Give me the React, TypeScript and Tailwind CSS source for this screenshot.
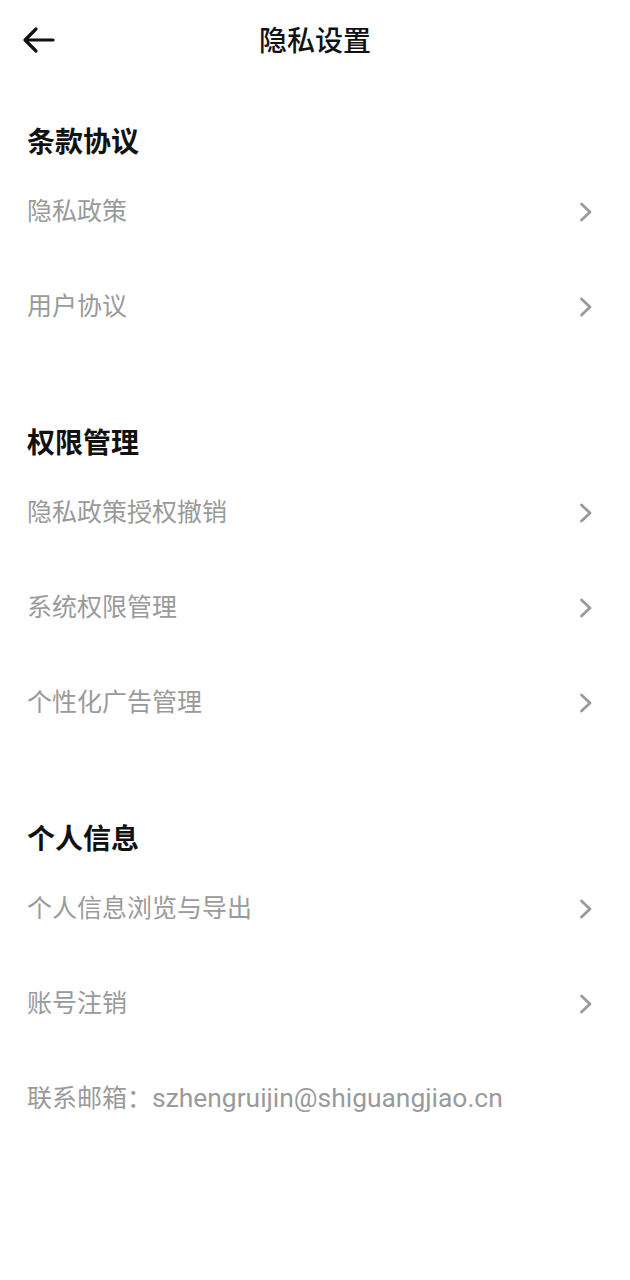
import React from 'react';

const font = "font-['Roboto','Noto_Sans_CJK_SC',sans-serif]";

interface Section {
  title: string;
  items: string[];
}

const sections: Section[] = [
  { title: '条款协议', items: ['隐私政策', '用户协议'] },
  { title: '权限管理', items: ['隐私政策授权撤销', '系统权限管理', '个性化广告管理'] },
  { title: '个人信息', items: ['个人信息浏览与导出', '账号注销'] },
];

const Chevron = () => (
  <svg width="15" height="22" viewBox="0 0 15 22" fill="none" className="shrink-0">
    <path d="M3.5 3l8.5 8-8.5 8" stroke="#9a9a9a" strokeWidth="2.8" strokeLinecap="round" strokeLinejoin="round" />
  </svg>
);

const App: React.FC = () => {
  return (
    <div className={`w-[630px] min-h-[1280px] bg-white ${font}`}>
      {/* top bar */}
      <div className="relative h-[84px] flex items-center justify-center">
        <button className="absolute left-[22px] top-[26px]">
          <svg width="34" height="28" viewBox="0 0 34 28" fill="none">
            <path d="M31 14H4M14 3L3 14l11 11" stroke="#111" strokeWidth="3.2" strokeLinecap="round" strokeLinejoin="round" />
          </svg>
        </button>
        <h1 className="text-[28px] font-medium text-[#111] leading-none">隐私设置</h1>
      </div>

      <div className="mt-[38px]">
        {sections.map((section, i) => (
          <div key={section.title} className={i > 0 ? 'mt-[69px]' : ''}>
            <div className="h-[42px] flex items-center px-[27px]">
              <h2 className="text-[28px] font-bold text-[#111] leading-none">{section.title}</h2>
            </div>
            {section.items.map((item) => (
              <div key={item} className="h-[95px] flex items-center justify-between pl-[27px] pr-[37px]">
                <span className="text-[25px] text-[#9a9a9a] leading-none">{item}</span>
                <Chevron />
              </div>
            ))}
          </div>
        ))}
        <div className="h-[95px] flex items-center px-[27px]">
          <span className="text-[25px] text-[#9a9a9a] leading-none">
            联系邮箱：<span className="text-[26.4px]">szhengruijin@shiguangjiao.cn</span>
          </span>
        </div>
      </div>
    </div>
  );
};

export default App;
